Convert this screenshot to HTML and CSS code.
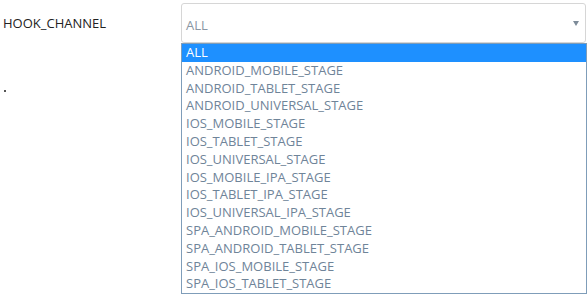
FILE: index.html
```html
<!DOCTYPE html>
<html lang="en">
<head>
    <meta charset="UTF-8">
    <title>Hook channel</title>
    <link rel="stylesheet" href="styles.css">
</head>
<body>
    <div class="form-row">
        <div class="label-col">
            <label class="field-label">HOOK_CHANNEL</label>
            <span class="stray-mark"></span>
        </div>
        <div class="select-wrap">
            <div class="select-box">
                <span class="select-value">ALL</span>
                <span class="select-arrow"></span>
            </div>
            <div class="option-list">
                <div class="option selected">ALL</div>
                <div class="option">ANDROID_MOBILE_STAGE</div>
                <div class="option">ANDROID_TABLET_STAGE</div>
                <div class="option">ANDROID_UNIVERSAL_STAGE</div>
                <div class="option">IOS_MOBILE_STAGE</div>
                <div class="option">IOS_TABLET_STAGE</div>
                <div class="option">IOS_UNIVERSAL_STAGE</div>
                <div class="option">IOS_MOBILE_IPA_STAGE</div>
                <div class="option">IOS_TABLET_IPA_STAGE</div>
                <div class="option">IOS_UNIVERSAL_IPA_STAGE</div>
                <div class="option">SPA_ANDROID_MOBILE_STAGE</div>
                <div class="option">SPA_ANDROID_TABLET_STAGE</div>
                <div class="option">SPA_IOS_MOBILE_STAGE</div>
                <div class="option">SPA_IOS_TABLET_STAGE</div>
            </div>
        </div>
    </div>
</body>
</html>
```

FILE: styles.css
```css
body {
    font-family: "Open Sans", Arial, sans-serif;
    font-size: 13px;
    background-color: #fff;
    margin: 0;
    padding: 3px 0 0 0;
    color: #333;
}
.form-row {
    display: flex;
    align-items: flex-start;
}
.label-col {
    width: 181px;
    padding: 11px 0 0 3px;
    box-sizing: border-box;
    display: flex;
    flex-direction: column;
}
.field-label {
    color: #222;
}
.stray-mark {
    width: 2px;
    height: 2px;
    margin: 58px 0 0 1px;
    background: #555;
}
.select-wrap {
    width: 405px;
}
.select-box {
    height: 40px;
    box-sizing: border-box;
    border: 1px solid #d6d6d6;
    border-radius: 3px;
    display: flex;
    align-items: center;
    justify-content: space-between;
    padding: 0 6px 0 4px;
    color: #8a96a3;
}
.select-value {
    margin-top: 3px;
}
.select-arrow {
    width: 0;
    height: 0;
    border-left: 3px solid transparent;
    border-right: 3px solid transparent;
    border-top: 5px solid #7d8b99;
    margin-top: 1px;
}
.option-list {
    margin-right: -1px;
    background: #fff;
    border: 1px solid #7f9db9;
}
.option {
    height: 17.8px;
    line-height: 17.8px;
    padding-left: 4px;
    color: #6f8499;
}
.option.selected {
    background-color: #1e90ff;
    color: #fff;
}
```
